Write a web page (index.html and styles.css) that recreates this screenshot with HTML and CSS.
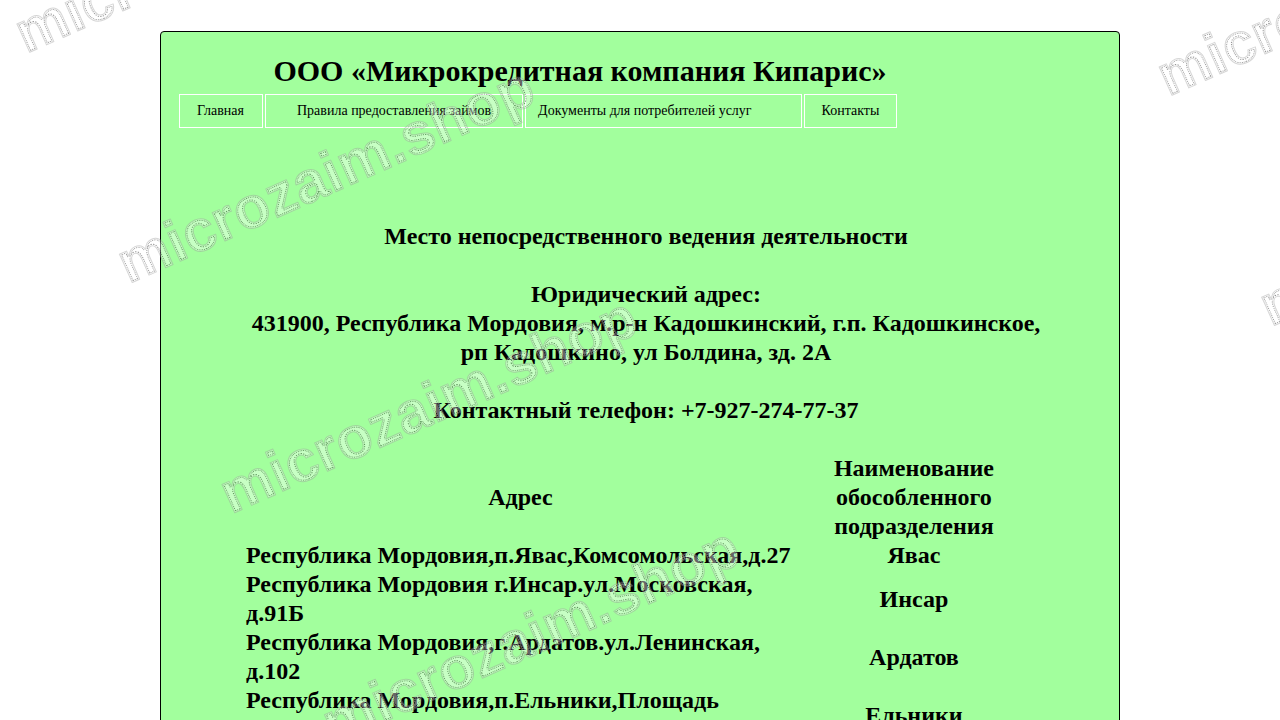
FILE: index.html
```
<!DOCTYPE html>
<html lang="ru">
<head>
    <meta charset="UTF-8">
    <meta name="viewport" content="width=device-width, initial-scale=1.0">
    <title>ООО «Микрокредитная компания Кипарис»</title>
    <link rel="stylesheet" href="styles.css">
</head>
<body>
    <div class="page">
        <header class="header">
            <h1>ООО «Микрокредитная компания Кипарис»</h1>
            <nav class="menu">
                <a class="home" href="#">Главная</a>
                <a class="rules" href="#">Правила предоставления займов</a>
                <a class="docs" href="#">Документы для потребителей услуг</a>
                <a class="contacts" href="#">Контакты</a>
            </nav>
        </header>
        <main class="content">
            <h2>Место непосредственного ведения деятельности</h2>
            <p>Юридический адрес:<br>
            431900, Республика Мордовия, м.р-н Кадошкинский, г.п. Кадошкинское, рп Кадошкино, ул Болдина, зд. 2А</p>
            <p>Контактный телефон: +7-927-274-77-37</p>
            <table>
                <tr>
                    <th>Адрес</th>
                    <th class="name">Наименование<br>обособленного<br>подразделения</th>
                </tr>
                <tr>
                    <td>Республика Мордовия,п.Явас,Комсомольская,д.27</td>
                    <td class="name">Явас</td>
                </tr>
                <tr>
                    <td>Республика Мордовия г.Инсар.ул.Московская, д.91Б</td>
                    <td class="name">Инсар</td>
                </tr>
                <tr>
                    <td>Республика Мордовия,г.Ардатов.ул.Ленинская, д.102</td>
                    <td class="name">Ардатов</td>
                </tr>
                <tr>
                    <td>Республика Мордовия,п.Ельники,Площадь<br>&nbsp;</td>
                    <td class="name">Ельники</td>
                </tr>
            </table>
        </main>
    </div>

    <svg class="watermark" aria-hidden="true">
        <defs>
            <clipPath id="inside">
                <text>microzaim.shop</text>
            </clipPath>
            <g id="mark">
                <g clip-path="url(#inside)">
                    <text class="fill">microzaim.shop</text>
                    <text class="dots">microzaim.shop</text>
                    <text class="gap">microzaim.shop</text>
                </g>
                <text class="edge">microzaim.shop</text>
            </g>
        </defs>
        <!-- rows are 252 apart, the text repeats every 1026 along a row -->
        <g transform="translate(26 54) rotate(-24)">
            <use href="#mark"/>
            <use href="#mark" y="252"/>
            <use href="#mark" y="504"/>
            <use href="#mark" y="756"/>
            <use href="#mark" x="1026" y="504"/>
            <use href="#mark" x="1026" y="756"/>
        </g>
    </svg>
</body>
</html>
```
FILE: styles.css
```
body {
    margin: 0;
    background: white;
    color: black;
    font-family: "Liberation Serif", "Times New Roman", serif;
}
.page {
    box-sizing: border-box;
    max-width: 960px;
    margin: 31px auto 0;
    padding: 22px 18px 40px;
    border: 1px solid black;
    border-radius: 4px;
    background: #a2ff9d;
}
.header {
    max-width: 802px;
}
h1 {
    margin: 0 0 6px;
    font-size: 30px;
    line-height: 34px;
    text-align: center;
}
.menu {
    display: flex;
    gap: 2px;
}
.menu a {
    padding: 8px 17px;
    border: 1px solid white;
    color: black;
    font-size: 14px;
    line-height: 16px;
    text-decoration: none;
}
.menu .home {
    padding-right: 18px;
}
.menu .rules {
    padding: 8px 31px;
}
.menu .docs {
    padding: 8px 49px 8px 12px;
}
.content {
    max-width: 802px;
    margin: 94px 0 0 66px;
    font-size: 24px;
    font-weight: bold;
    line-height: 29px;
    text-align: center;
}
h2 {
    margin: 0 0 29px;
    font-size: 24px;
}
p {
    margin: 0 0 29px;
}
table {
    width: 787px;
    max-width: 100%;
    border-collapse: collapse;
}
th {
    padding: 0 1px;
}
td {
    padding: 0 1px;
    text-align: left;
}
.name {
    width: 30%;
    text-align: center;
}
.watermark {
    position: absolute;
    top: 0;
    left: 0;
    width: 100%;
    height: 100vh;
    overflow: hidden;
    opacity: 0.4;
    pointer-events: none;
}
.watermark text {
    font-family: "Liberation Sans", Arial, sans-serif;
    font-size: 59px;
    font-weight: bold;
}
.fill {
    fill: white;
}
.dots {
    fill: none;
    stroke: black;
    stroke-width: 4px;
    stroke-dasharray: 1 1;
    stroke-linejoin: bevel;
}
.gap {
    fill: none;
    stroke: white;
    stroke-width: 2px;
}
.edge {
    fill: none;
    stroke: #999;
    stroke-width: 1px;
    stroke-linejoin: round;
}
```
